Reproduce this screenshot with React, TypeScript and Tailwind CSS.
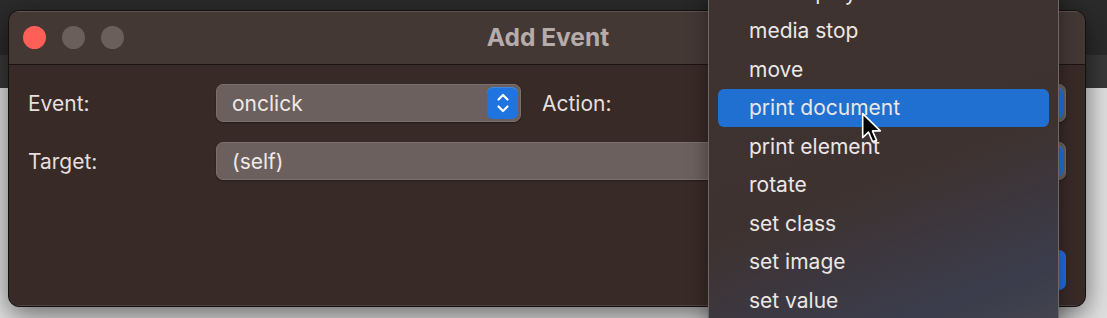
import React from "react";

const items = [
  "media play",
  "media stop",
  "move",
  "print document",
  "print element",
  "rotate",
  "set class",
  "set image",
  "set value",
];

function Stepper() {
  return (
    <div className="w-[31px] h-[32px] rounded-[6px] bg-[#1f74e0] flex items-center justify-center shadow-[inset_0_1px_0_rgba(255,255,255,0.15)]">
      <svg width="14" height="22" viewBox="0 0 14 22" fill="none" stroke="#ffffff" strokeWidth="2.2" strokeLinecap="round" strokeLinejoin="round">
        <path d="M2.5 7.5 L7 3 L11.5 7.5" />
        <path d="M2.5 14.5 L7 19 L11.5 14.5" />
      </svg>
    </div>
  );
}

function Popup({ text, className }: { text: string; className?: string }) {
  return (
    <div
      className={
        "h-[38px] rounded-[7px] bg-[#6b605d] border border-[#7b706c] shadow-[0_1px_2px_rgba(0,0,0,0.35)] flex items-center justify-between pl-[15px] pr-[2px] " +
        (className ?? "")
      }
    >
      <span className="text-[#efe9e7]">{text}</span>
      <Stepper />
    </div>
  );
}

export default function App() {
  return (
    <div className="relative w-[1107px] h-[318px] overflow-hidden font-['Inter',sans-serif] text-[21px] leading-none">
      {/* backdrop */}
      <div className="flex flex-col h-full">
        <div className="h-[55px] bg-[#2b2b2b]" />
        <div className="h-[33px] bg-[#393939]" />
        <div className="flex-1 bg-[#e2e2e2]" />
      </div>

      {/* window */}
      <div className="absolute left-[8px] top-[10px] w-[1078px] h-[297px] rounded-[11px] bg-[#382a27] border border-[#141010] shadow-[0_8px_28px_rgba(0,0,0,0.55)] flex flex-col overflow-hidden">
        <div className="relative h-[54px] bg-[#443835] border-b border-[#1c1412] shadow-[inset_0_1px_0_rgba(255,255,255,0.14)] flex items-center pl-[14px] gap-[16px]">
          <div className="w-[23px] h-[23px] rounded-full bg-[#fe5f57]" />
          <div className="w-[23px] h-[23px] rounded-full bg-[#6a5f5b]" />
          <div className="w-[23px] h-[23px] rounded-full bg-[#6a5f5b]" />
          <div className="absolute inset-0 flex items-center justify-center pl-[2px] pointer-events-none">
            <span className="text-[24.5px] font-bold text-[#b6acaa]">Add Event</span>
          </div>
        </div>
        <div className="flex-1 flex flex-col px-[19px] pt-[19px] pb-[16px] gap-[20px] text-[#e6dfdd] shadow-[inset_0_-1px_0_rgba(255,255,255,0.12)]">
          <div className="flex items-center">
            <span className="w-[188px]">Event:</span>
            <Popup text="onclick" className="w-[305px]" />
            <span className="ml-[21px] w-[190px]">Action:</span>
            <Popup text="" className="flex-1" />
          </div>
          <div className="flex items-center">
            <span className="w-[188px]">Target:</span>
            <Popup text="(self)" className="flex-1" />
          </div>
          <div className="flex-1 flex items-end justify-end">
            <div className="w-[90px] h-[40px] rounded-[7px] bg-[#1f6fe0] text-white flex items-center justify-center">
              OK
            </div>
          </div>
        </div>
      </div>

      {/* menu */}
      <div className="absolute left-[708px] top-[-27px] w-[351px] h-[360px] border-x border-[#6f6866] bg-[linear-gradient(160deg,#3f3330_0%,#3e3230_55%,#3b3c4b_85%,#44454f_100%)] shadow-[0_6px_20px_rgba(0,0,0,0.4)] flex flex-col px-[9px]">
        {items.map((t) => (
          <div
            key={t}
            className={
              "h-[38.5px] shrink-0 rounded-[6px] flex items-center pl-[31px] text-[#ece7e5] " +
              (t === "print document" ? "bg-[#2070d2]" : "")
            }
          >
            {t}
          </div>
        ))}
      </div>

      {/* cursor */}
      <svg className="absolute left-[861px] top-[112px]" width="21" height="32" viewBox="0 0 13 20">
        <path d="M1 1 L1 16 L4.6 12.6 L7.2 18.6 L9.6 17.6 L7.1 11.8 L12 11.8 Z" fill="#000000" stroke="#ffffff" strokeWidth="1" strokeLinejoin="round" />
      </svg>
    </div>
  );
}
